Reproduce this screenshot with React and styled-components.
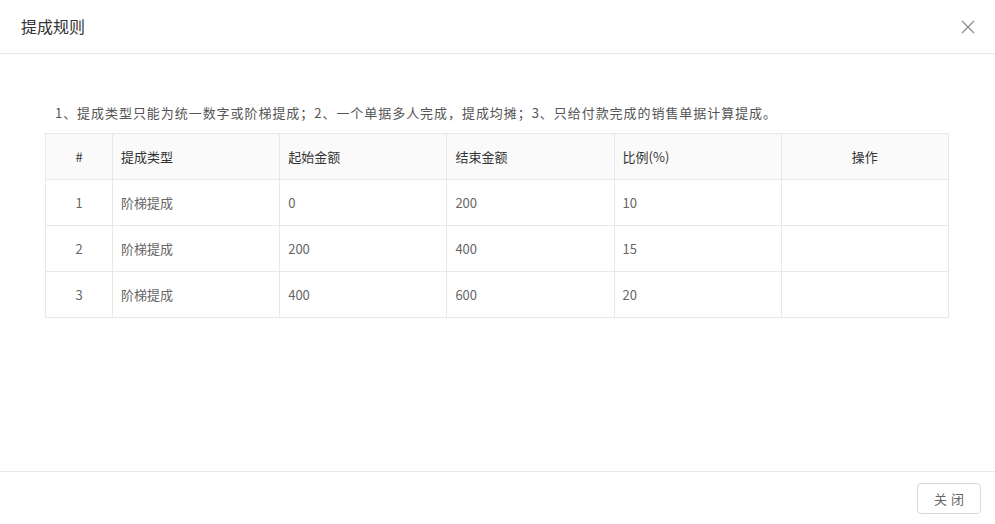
import styled, { createGlobalStyle } from "styled-components";

const GlobalStyle = createGlobalStyle`
  html, body {
    margin: 0;
    padding: 0;
    background: #fff;
    font-family: "Noto Sans CJK SC", "Noto Sans", sans-serif;
  }
`

// whole dialog fills the window
const Modal = styled.div`
  width: 995px;
  height: 524px;
  display: flex;
  flex-direction: column;
  background: #fff;
`
const Header = styled.div`
  height: 54px;
  border-bottom: 1px solid #e8e8e8;
  display: flex;
  align-items: center;
  justify-content: space-between;
  padding: 0 20px 0 21px;
  box-sizing: border-box;
`
const Title = styled.div`
  font-size: 16px;
  color: #333;
  line-height: 22px;
  margin-top: -1px;
`
const CloseBtn = styled.button`
  border: none;
  background: none;
  padding: 0;
  width: 14px;
  height: 14px;
  display: flex;
  cursor: pointer;
`
const Body = styled.div`
  flex: 1;
  padding: 49px 46px 0 45px;
`
const Tip = styled.p`
  margin: 0 0 10px;
  padding-left: 10px;
  font-size: 13px;
  line-height: 20px;
  color: #555;
  letter-spacing: 0.95px;
  white-space: nowrap;
`
const Table = styled.table`
  width: 100%;
  border-collapse: collapse;
  table-layout: fixed;
  font-size: 13px;
`
const Th = styled.th`
  height: 45px;
  background: #fafafa;
  border: 1px solid #e8e8e8;
  color: #333;
  font-weight: normal;
  padding: 0 8px;
  text-align: ${(p) => p.align || "left"};
`
const Td = styled.td`
  height: 45px;
  border: 1px solid #e8e8e8;
  color: #666;
  padding: 0 8px;
  text-align: ${(p) => p.align || "left"};
`
const Footer = styled.div`
  height: 53px;
  border-top: 1px solid #e8e8e8;
  display: flex;
  justify-content: flex-end;
  align-items: flex-start;
  padding: 11px 14px 0 0;
  box-sizing: border-box;
`
const Button = styled.button`
  width: 64px;
  height: 31px;
  border: 1px solid #d9d9d9;
  border-radius: 4px;
  background: #fff;
  color: #666;
  font-family: inherit;
  font-size: 13px;
  letter-spacing: 4px;
  padding: 0 0 0 4px;
  cursor: pointer;
`

const rows = [
  { id: 1, type: "阶梯提成", start: 0, end: 200, rate: 10 },
  { id: 2, type: "阶梯提成", start: 200, end: 400, rate: 15 },
  { id: 3, type: "阶梯提成", start: 400, end: 600, rate: 20 },
]

export default function App() {
  return (
    <>
      <GlobalStyle />
      <Modal>
        <Header>
          <Title>提成规则</Title>
          <CloseBtn aria-label="close">
            <svg width="14" height="14" viewBox="0 0 14 14">
              <path d="M1 1L13 13M13 1L1 13" stroke="#8c8c8c" strokeWidth="1.2" fill="none" />
            </svg>
          </CloseBtn>
        </Header>
        <Body>
          <Tip>1、提成类型只能为统一数字或阶梯提成；2、一个单据多人完成，提成均摊；3、只给付款完成的销售单据计算提成。</Tip>
          <Table>
            <colgroup>
              <col style={{ width: 67 }} />
              <col />
              <col />
              <col />
              <col />
              <col />
            </colgroup>
            <thead>
              <tr>
                <Th align="center">#</Th>
                <Th>提成类型</Th>
                <Th>起始金额</Th>
                <Th>结束金额</Th>
                <Th>比例(%)</Th>
                <Th align="center">操作</Th>
              </tr>
            </thead>
            <tbody>
              {rows.map((r) => (
                <tr key={r.id}>
                  <Td align="center">{r.id}</Td>
                  <Td>{r.type}</Td>
                  <Td>{r.start}</Td>
                  <Td>{r.end}</Td>
                  <Td>{r.rate}</Td>
                  <Td></Td>
                </tr>
              ))}
            </tbody>
          </Table>
        </Body>
        <Footer>
          <Button>关闭</Button>
        </Footer>
      </Modal>
    </>
  )
}
